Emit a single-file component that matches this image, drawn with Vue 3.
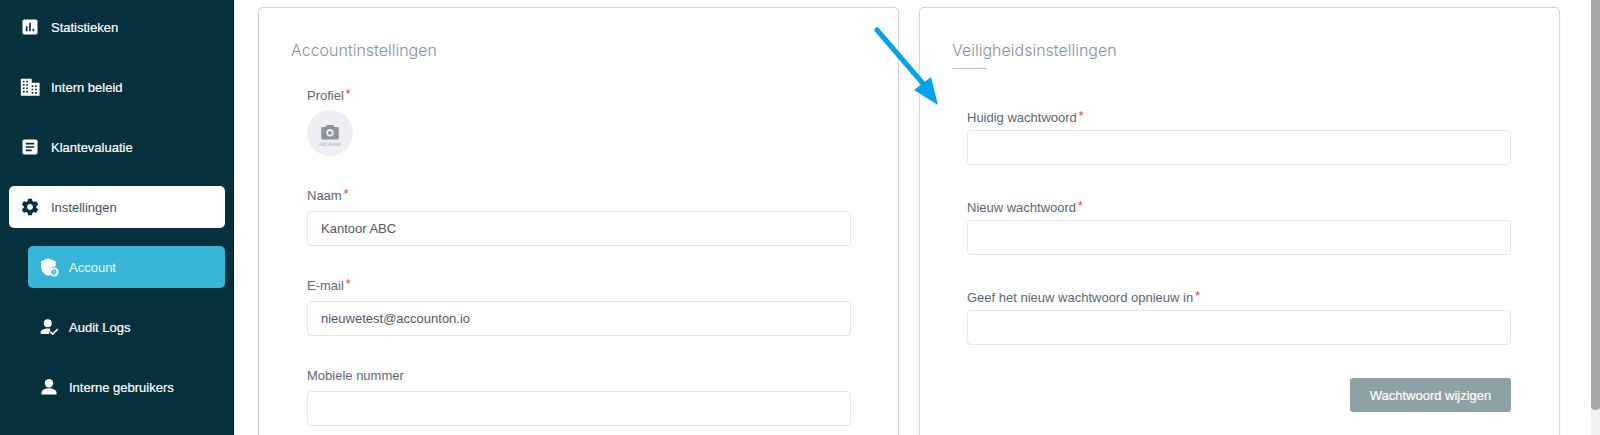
<template>
  <div class="page">
    <aside class="sidebar">
      <div
        v-for="item in menu"
        :key="item.label"
        class="menu-item"
        :class="{ sub: item.sub, open: item.open, active: item.active }"
      >
        <svg class="menu-icon" viewBox="0 0 24 24" v-html="item.icon"></svg>
        <span>{{ item.label }}</span>
      </div>
    </aside>

    <main class="content">
      <section class="card">
        <h2>Accountinstellingen</h2>
        <div class="fields">
          <div class="field">
            <label>Profiel<sup>*</sup></label>
            <div class="avatar">
              <svg viewBox="0 0 24 24" class="camera">
                <path fill-rule="evenodd" d="M8.2 3.5h7.6L17.4 6H21a1.5 1.5 0 0 1 1.500 1.500V19.500A1.500 1.500 0 0 1 21 21H3a1.500 1.500 0 0 1-1.500-1.500V7.500A1.500 1.500 0 0 1 3 6h3.600zM12 8.500a4.500 4.500 0 1 0 0 9 4.500 4.500 0 0 0 0-9zm0 2.200a2.300 2.300 0 1 1 0 4.600 2.300 2.300 0 0 1 0-4.600z" />
              </svg>
              <span>Add Avatar</span>
            </div>
          </div>
          <div class="field">
            <label>Naam<sup>*</sup></label>
            <input type="text" value="Kantoor ABC" />
          </div>
          <div class="field">
            <label>E-mail<sup>*</sup></label>
            <input type="text" value="nieuwetest@accounton.io" />
          </div>
          <div class="field">
            <label>Mobiele nummer</label>
            <input type="text" />
          </div>
        </div>
      </section>

      <section class="card">
        <h2 class="underlined">Veiligheidsinstellingen</h2>
        <div class="fields security">
          <div class="field">
            <label>Huidig wachtwoord<sup>*</sup></label>
            <input type="password" />
          </div>
          <div class="field">
            <label>Nieuw wachtwoord<sup>*</sup></label>
            <input type="password" />
          </div>
          <div class="field">
            <label>Geef het nieuw wachtwoord opnieuw in<sup>*</sup></label>
            <input type="password" />
          </div>
          <div class="actions">
            <button>Wachtwoord wijzigen</button>
          </div>
        </div>
      </section>
    </main>

    <div class="scrollbar"><div class="thumb"></div></div>

    <svg class="arrow" viewBox="0 0 70 82">
      <path d="M3 3 L52 60" stroke="#05a4e8" stroke-width="5" stroke-linecap="round" fill="none" />
      <path d="M64 78 L40 63 L57 50 Z" fill="#05a4e8" />
    </svg>
  </div>
</template>

<script setup>
const menu = [
  {
    label: 'Statistieken',
    icon: '<path fill="#fff" d="M5 3h14a2 2 0 0 1 2 2v14a2 2 0 0 1-2 2H5a2 2 0 0 1-2-2V5a2 2 0 0 1 2-2z"/><path fill="#06303c" d="M7 11h2v6H7zM11 7h2v10h-2zM15 14h2v3h-2z"/>'
  },
  {
    label: 'Intern beleid',
    icon: '<path fill="#fff" fill-rule="evenodd" d="M1 2h13v5h9.500v15.500H1zM3.500 4.500v2h2v-2zm4 0v2h2v-2zm-4 4v2h2v-2zm4 0v2h2v-2zm-4 4v2h2v-2zm4 0v2h2v-2zm-4 4v2h2v-2zm4 0v2h2v-2zM14 10v2h2v-2zm4 0v2h2v-2zm-4 4v2h2v-2zm4 0v2h2v-2zm-4 4v2h2v-2zm4 0v2h2v-2z"/>'
  },
  {
    label: 'Klantevaluatie',
    icon: '<path fill="#fff" d="M5 3h14a2 2 0 0 1 2 2v14a2 2 0 0 1-2 2H5a2 2 0 0 1-2-2V5a2 2 0 0 1 2-2z"/><path fill="#06303c" d="M7 7h10v2H7zM7 11h10v2H7zM7 15h7v2H7z"/>'
  },
  {
    label: 'Instellingen',
    open: true,
    icon: '<path fill="#06303c" d="M19.430 12.980c.04-.32.07-.64.07-.98s-.03-.66-.07-.98l2.110-1.650c.19-.15.24-.42.120-.64l-2-3.460c-.12-.22-.39-.3-.61-.22l-2.490 1c-.52-.4-1.080-.73-1.690-.98l-.38-2.650A.488.488 0 0 0 14 2h-4c-.25 0-.46.18-.49.42l-.38 2.650c-.61.25-1.170.59-1.690.98l-2.490-1c-.23-.09-.49 0-.61.22l-2 3.460c-.13.22-.07.49.12.64l2.110 1.650c-.04.32-.07.65-.07.98s.03.66.07.98l-2.110 1.650c-.19.15-.24.42-.12.64l2 3.460c.12.22.39.3.61.22l2.490-1c.52.4 1.080.73 1.690.98l.38 2.650c.03.24.24.42.49.42h4c.25 0 .46-.18.49-.42l.38-2.650c.61-.25 1.170-.59 1.690-.98l2.490 1c.23.09.49 0 .61-.22l2-3.460c.12-.22.07-.49-.12-.64l-2.110-1.650zM12 15.500c-1.930 0-3.500-1.570-3.500-3.500s1.570-3.500 3.500-3.500 3.500 1.570 3.500 3.500-1.570 3.500-3.500 3.500z"/>'
  },
  {
    label: 'Account',
    sub: true,
    active: true,
    icon: '<path fill="#fff" d="M11 1.500 2.500 5v6c0 5.300 3.600 10.200 8.500 11.500.9-.25 1.700-.6 2.500-1.100A6.500 6.500 0 0 1 20 11.600V5z"/><circle cx="18" cy="18" r="5.500" fill="#fff"/><path fill="none" stroke="#38b5d6" stroke-width="1.500" d="M15.500 18h5a2.500 2.500 0 1 0-.7 1.800"/>'
  },
  {
    label: 'Audit Logs',
    sub: true,
    icon: '<circle cx="10.500" cy="7.500" r="4.800" fill="#fff"/><path fill="#fff" d="M2 20.500v-2.200c0-3 5-4.600 8.500-4.600 1 0 2.100.13 3.100.37l-1.600 6.430z"/><path fill="none" stroke="#fff" stroke-width="2" d="m13.500 17.500 3 3 6-6"/>'
  },
  {
    label: 'Interne gebruikers',
    sub: true,
    icon: '<circle cx="12" cy="7.500" r="5" fill="#fff"/><path fill="#fff" d="M3 21v-2.500c0-3.300 6-5 9-5s9 1.700 9 5V21z"/>'
  }
]
</script>

<style scoped>
.page {
  display: flex;
  height: 435px;
  overflow: hidden;
  position: relative;
  background: #fff;
  font-family: "Liberation Sans", Arial, sans-serif;
}
.sidebar {
  width: 234px;
  flex: none;
  box-sizing: border-box;
  padding: 6px 8px 0 9px;
  display: flex;
  flex-direction: column;
  gap: 18px;
  background: #06303c;
  border-right: 1px solid #111;
}
.menu-item {
  height: 42px;
  flex: none;
  box-sizing: border-box;
  display: flex;
  align-items: center;
  gap: 11px;
  padding-left: 11px;
  border-radius: 5px;
  font-size: 13px;
  color: #fff;
  -webkit-text-stroke: 0.2px currentColor;
}
.menu-item.sub {
  margin-left: 19px;
  gap: 10px;
}
.menu-item.open {
  background: #fff;
  color: #3f5660;
  -webkit-text-stroke: 0;
}
.menu-item.active {
  background: #38b5d6;
  color: #eaf8fc;
  -webkit-text-stroke: 0;
}
.menu-icon {
  width: 20px;
  height: 20px;
  flex: none;
}
.content {
  flex: 1;
  min-width: 0;
  display: flex;
  gap: 20px;
  padding: 7px 31px 0 24px;
  background: #fff;
}
.card {
  flex: 1;
  min-width: 0;
  height: 500px;
  box-sizing: border-box;
  border: 1px solid #d3d5df;
  border-radius: 5px;
  box-shadow: 0 0 1px #c4c7d3;
  padding: 32px 32px 0;
}
h2 {
  margin: 0;
  font-family: Inter, "Liberation Sans", sans-serif;
  font-size: 16px;
  font-weight: 300;
  line-height: 20px;
  color: #8c90a0;
}
h2.underlined::after {
  content: "";
  display: block;
  width: 35px;
  height: 1px;
  margin-top: 8px;
  background: #bfc2ce;
}
.fields {
  display: flex;
  flex-direction: column;
  gap: 31px;
  padding: 27px 15px 0 16px;
}
.fields.security {
  padding: 40px 16px 0 15px;
  gap: 34px;
}
label {
  font-size: 13px;
  line-height: 18px;
  margin-bottom: 6px;
  color: #62666f;
}
.security label {
  margin-bottom: 3px;
}
.field {
  display: flex;
  flex-direction: column;
}
sup {
  color: #ee2a2a;
  font-size: 12px;
  line-height: 0;
  margin-left: 2px;
  vertical-align: 2px;
}
input {
  height: 35px;
  box-sizing: border-box;
  padding: 0 13px;
  border: 1px solid #e6e7eb;
  border-radius: 4px;
  outline: none;
  font-family: inherit;
  font-size: 13px;
  color: #55585f;
  background: #fff;
}
.avatar {
  width: 46px;
  height: 46px;
  margin-top: -1px;
  border-radius: 50%;
  background: #eeeff3;
  display: flex;
  flex-direction: column;
  align-items: center;
  justify-content: center;
}
.camera {
  width: 20px;
  height: 20px;
  fill: #90939f;
  margin-top: 3px;
}
.avatar span {
  font-size: 4.500px;
  line-height: 6px;
  color: #adb0ba;
  white-space: nowrap;
}
.actions {
  display: flex;
  justify-content: flex-end;
  margin-top: -1px;
}
button {
  width: 161px;
  height: 34px;
  border: none;
  border-radius: 3px;
  background: #8ea2a5;
  color: #fff;
  font-family: inherit;
  font-size: 13px;
  font-weight: 400;
  -webkit-text-stroke: 0.2px #fff;
}
.scrollbar {
  width: 9px;
  flex: none;
  background: #f1f1f1;
}
.thumb {
  height: 410px;
  border-radius: 0 0 4px 4px;
  background: #a8a8a8;
}
.arrow {
  position: absolute;
  left: 874px;
  top: 27px;
  width: 70px;
  height: 82px;
}
</style>
